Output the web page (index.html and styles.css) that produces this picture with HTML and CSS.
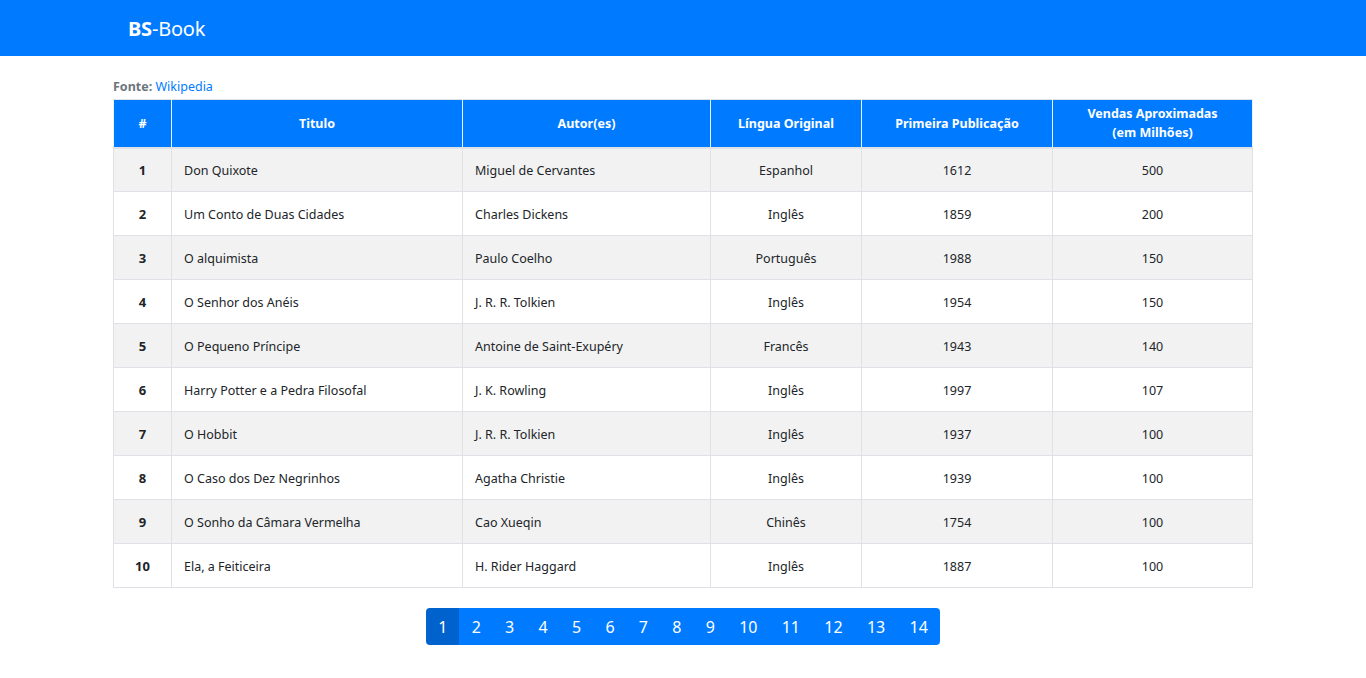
FILE: index.html
```html
<!DOCTYPE html>
<html lang="pt-BR">
<head>
<meta charset="utf-8">
<title>BS-Book</title>
<link rel="stylesheet" href="styles.css">
</head>
<body>
<nav class="navbar">
  <div class="container">
    <a class="brand" href="#"><b>BS</b>-Book</a>
  </div>
</nav>
<main class="container main">
  <p class="source"><b>Fonte:</b> <a href="#">Wikipedia</a></p>
  <table class="books">
    <colgroup>
      <col style="width:58px"><col style="width:291px"><col style="width:248px"><col style="width:151px"><col style="width:191px"><col style="width:200px">
    </colgroup>
    <thead>
      <tr><th>#</th><th>Titulo</th><th>Autor(es)</th><th>Língua Original</th><th>Primeira Publicação</th><th>Vendas Aproximadas<br>(em Milhões)</th></tr>
    </thead>
    <tbody>
      <tr><td class="n">1</td><td>Don Quixote</td><td>Miguel de Cervantes</td><td class="c">Espanhol</td><td class="c">1612</td><td class="c">500</td></tr>
      <tr><td class="n">2</td><td>Um Conto de Duas Cidades</td><td>Charles Dickens</td><td class="c">Inglês</td><td class="c">1859</td><td class="c">200</td></tr>
      <tr><td class="n">3</td><td>O alquimista</td><td>Paulo Coelho</td><td class="c">Português</td><td class="c">1988</td><td class="c">150</td></tr>
      <tr><td class="n">4</td><td>O Senhor dos Anéis</td><td>J. R. R. Tolkien</td><td class="c">Inglês</td><td class="c">1954</td><td class="c">150</td></tr>
      <tr><td class="n">5</td><td>O Pequeno Príncipe</td><td>Antoine de Saint-Exupéry</td><td class="c">Francês</td><td class="c">1943</td><td class="c">140</td></tr>
      <tr><td class="n">6</td><td>Harry Potter e a Pedra Filosofal</td><td>J. K. Rowling</td><td class="c">Inglês</td><td class="c">1997</td><td class="c">107</td></tr>
      <tr><td class="n">7</td><td>O Hobbit</td><td>J. R. R. Tolkien</td><td class="c">Inglês</td><td class="c">1937</td><td class="c">100</td></tr>
      <tr><td class="n">8</td><td>O Caso dos Dez Negrinhos</td><td>Agatha Christie</td><td class="c">Inglês</td><td class="c">1939</td><td class="c">100</td></tr>
      <tr><td class="n">9</td><td>O Sonho da Câmara Vermelha</td><td>Cao Xueqin</td><td class="c">Chinês</td><td class="c">1754</td><td class="c">100</td></tr>
      <tr><td class="n">10</td><td>Ela, a Feiticeira</td><td>H. Rider Haggard</td><td class="c">Inglês</td><td class="c">1887</td><td class="c">100</td></tr>
    </tbody>
  </table>
  <ul class="pagination">
    <li class="active"><a href="#">1</a></li>
    <li><a href="#">2</a></li>
    <li><a href="#">3</a></li>
    <li><a href="#">4</a></li>
    <li><a href="#">5</a></li>
    <li><a href="#">6</a></li>
    <li><a href="#">7</a></li>
    <li><a href="#">8</a></li>
    <li><a href="#">9</a></li>
    <li><a href="#">10</a></li>
    <li><a href="#">11</a></li>
    <li><a href="#">12</a></li>
    <li><a href="#">13</a></li>
    <li><a href="#">14</a></li>
  </ul>
</main>
</body>
</html>
```

FILE: styles.css
```css
* { box-sizing: border-box; }
html, body { margin: 0; padding: 0; }
body {
  font-family: "Noto Sans", "Open Sans", "DejaVu Sans", sans-serif;
  color: #212529;
  background: #fff;
  font-size: 16px;
  line-height: 1.5;
}
a { color: #007bff; text-decoration: none; }
.container {
  width: 1140px;
  margin: 0 auto;
}
.navbar {
  background: #007bff;
  height: 56px;
}
.navbar .container {
  height: 56px;
  display: flex;
  align-items: center;
  padding: 2px 15px 0;
}
.brand {
  color: #fff;
  font-size: 20px;
  line-height: 30px;
  letter-spacing: -0.2px;
}
.brand b { font-weight: 700; }
.main { padding-top: 21px; }
.source {
  margin: 0 0 3px;
  font-size: 12.5px;
  line-height: 19px;
  color: #6c757d;
}
.source b { font-weight: 700; }
.books {
  width: 1140px;
  border-collapse: collapse;
  table-layout: fixed;
  font-size: 12.5px;
}
.books th, .books td {
  border: 1px solid #dee2e6;
}
.books th {
  background: #007bff;
  color: #fff;
  font-weight: 700;
  text-align: center;
  vertical-align: middle;
  height: 48px;
  padding: 4px 12px;
  line-height: 19px;
  border-color: #dee2e6;
  border-left-color: #e9f2ff;
  border-right-color: #e9f2ff;
  border-bottom: 2px solid #dee2e6;
}
.books td {
  height: 44px;
  padding: 1px 12px 0;
  line-height: 19px;
  vertical-align: middle;
}
.books tbody tr:nth-child(odd) { background: #f2f2f2; }
.books td.n { text-align: center; font-weight: 700; font-size: 13px; }
.books td.c { text-align: center; }
.pagination {
  list-style: none;
  margin: 20px 0 0;
  padding: 0;
  display: flex;
  justify-content: center;
}
.pagination li a {
  display: block;
  background: #007bff;
  color: #fff;
  font-size: 16px;
  line-height: 21px;
  height: 37px;
  padding: 9px 12.15px 7px;
}
.pagination li:first-child a { border-radius: 4px 0 0 4px; }
.pagination li:last-child a { border-radius: 0 4px 4px 0; }
.pagination li.active a { background: #0062cc; }
```
